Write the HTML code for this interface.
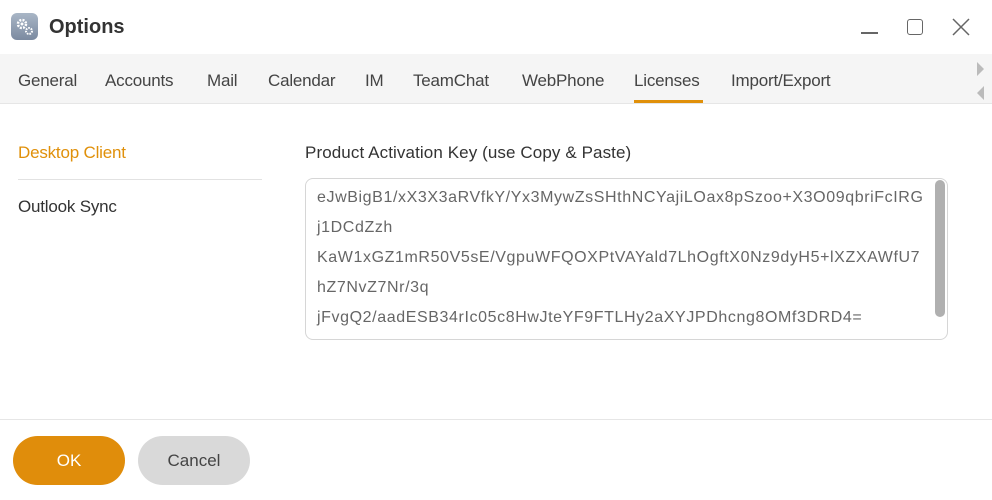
<!DOCTYPE html>
<html><head><style>
*{margin:0;padding:0;box-sizing:border-box}
body{width:992px;height:500px;background:#fff;font-family:"Liberation Sans",sans-serif;color:#333;position:relative;overflow:hidden}
.a{position:absolute;white-space:nowrap}
.tab{position:absolute;top:71px;font-size:17px;color:#444;letter-spacing:-0.2px}
.key{position:absolute;left:317px;font-size:16px;color:#666;letter-spacing:0.6px;white-space:nowrap}
</style></head><body>
<div class="a" style="left:11px;top:13px;width:27px;height:27px;border-radius:6px;background:linear-gradient(#a9b6c6,#7b8aa0)">
<svg width="27" height="27" viewBox="0 0 27 27"><circle cx="11" cy="11" r="4" fill="none" stroke="#fff" stroke-width="2.5" stroke-dasharray="2 1.2"/><circle cx="11" cy="11" r="1.5" fill="#fff"/><circle cx="18" cy="18" r="3" fill="none" stroke="#fff" stroke-width="2" stroke-dasharray="1.6 1"/></svg></div>
<div class="a" style="left:49px;top:16px;font-size:20px;font-weight:bold;color:#333">Options</div>
<div class="a" style="left:861px;top:32px;width:17px;height:1.5px;background:#666"></div>
<div class="a" style="left:907px;top:19px;width:16px;height:16px;border:1.5px solid #666;border-radius:3px"></div>
<svg class="a" style="left:952px;top:18px" width="18" height="18"><path d="M1 1L17 17M17 1L1 17" stroke="#666" stroke-width="1.5"/></svg>
<div class="a" style="left:0;top:54px;width:992px;height:50px;background:#f5f5f5;border-bottom:1px solid #e6e6e6"></div>
<div class="tab" style="left:18px">General</div>
<div class="tab" style="left:105px">Accounts</div>
<div class="tab" style="left:207px">Mail</div>
<div class="tab" style="left:268px">Calendar</div>
<div class="tab" style="left:365px">IM</div>
<div class="tab" style="left:413px">TeamChat</div>
<div class="tab" style="left:522px">WebPhone</div>
<div class="tab" style="left:634px">Licenses</div>
<div class="tab" style="left:731px">Import/Export</div>
<div class="a" style="left:634px;top:100px;width:69px;height:3px;background:#e0900a"></div>
<svg class="a" style="left:975px;top:60px" width="12" height="44"><path d="M2 2L9 9L2 16Z M9 26L2 33L9 40Z" fill="#bbb"/></svg>
<div class="a" style="left:18px;top:143px;font-size:17px;color:#e0900a;letter-spacing:-0.2px">Desktop Client</div>
<div class="a" style="left:18px;top:179px;width:244px;height:1px;background:#e2e2e2"></div>
<div class="a" style="left:18px;top:197px;font-size:17px;color:#333;letter-spacing:-0.2px">Outlook Sync</div>
<div class="a" style="left:305px;top:143px;font-size:17px;color:#333;letter-spacing:0.1px">Product Activation Key (use Copy &amp; Paste)</div>
<div class="a" style="left:305px;top:178px;width:643px;height:162px;border:1px solid #d6d6d6;border-radius:8px"></div>
<div class="a" style="left:935px;top:180px;width:10px;height:137px;background:#b0b0b0;border-radius:5px"></div>
<div class="key" style="top:189px">eJwBigB1/xX3X3aRVfkY/Yx3MywZsSHthNCYajiLOax8pSzoo+X3O09qbriFcIRG</div>
<div class="key" style="top:219px">j1DCdZzh</div>
<div class="key" style="top:249px">KaW1xGZ1mR50V5sE/VgpuWFQOXPtVAYald7LhOgftX0Nz9dyH5+lXZXAWfU7</div>
<div class="key" style="top:279px">hZ7NvZ7Nr/3q</div>
<div class="key" style="top:309px">jFvgQ2/aadESB34rIc05c8HwJteYF9FTLHy2aXYJPDhcng8OMf3DRD4=</div>
<div class="a" style="left:0;top:419px;width:992px;height:1px;background:#e6e6e6"></div>
<div class="a" style="left:13px;top:436px;width:112px;height:49px;border-radius:25px;background:#e08d0b;color:#fff;font-size:17px;text-align:center;line-height:49px">OK</div>
<div class="a" style="left:138px;top:436px;width:112px;height:49px;border-radius:25px;background:#d9d9d9;color:#444;font-size:17px;text-align:center;line-height:49px">Cancel</div>
</body></html>
